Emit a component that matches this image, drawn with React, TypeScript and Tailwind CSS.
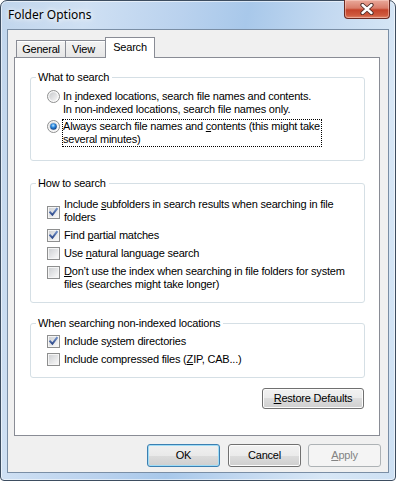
import React, { useId } from "react";

const uiFont = "font-['Liberation_Sans',Arial,sans-serif] text-[11px] leading-[13px] tracking-[-0.2px] text-black";

function cleanId(id: string) {
  return id.replace(/[^a-zA-Z0-9]/g, "");
}

function CheckBox({ checked }: { checked: boolean }) {
  const id = cleanId(useId());
  return (
    <svg width="13" height="13" viewBox="0 0 13 13" className="block shrink-0">
      <defs>
        <linearGradient id={id + "in"} x1="0" y1="0" x2="1" y2="1">
          <stop offset="0" stopColor="#cfd1d4" />
          <stop offset="1" stopColor="#f8f8f8" />
        </linearGradient>
        <linearGradient id={id + "ck"} x1="0" y1="0" x2="0" y2="1">
          <stop offset="0" stopColor="#6b8cc7" />
          <stop offset="1" stopColor="#2f4a8a" />
        </linearGradient>
      </defs>
      <rect x="0.5" y="0.5" width="12" height="12" fill="#f5f5f5" stroke="#8e8f8f" />
      <rect x="2" y="2" width="9" height="9" fill={`url(#${id}in)`} />
      {checked && (
        <path
          d="M3.2 6.4 L5.4 8.8 L9.8 3"
          fill="none"
          stroke={`url(#${id}ck)`}
          strokeWidth="2"
          strokeLinecap="square"
        />
      )}
    </svg>
  );
}

function Radio({ checked }: { checked: boolean }) {
  const id = cleanId(useId());
  return (
    <svg width="13" height="13" viewBox="0 0 13 13" className="block shrink-0">
      <defs>
        <linearGradient id={id + "out"} x1="0" y1="0" x2="1" y2="1">
          <stop offset="0" stopColor="#f2f2f2" />
          <stop offset="1" stopColor="#ffffff" />
        </linearGradient>
        <linearGradient id={id + "in"} x1="0" y1="0" x2="1" y2="1">
          <stop offset="0" stopColor="#c8cacd" />
          <stop offset="1" stopColor="#f6f6f6" />
        </linearGradient>
        <radialGradient id={id + "dot"} cx="0.45" cy="0.35" r="0.65">
          <stop offset="0" stopColor="#bfe6ff" />
          <stop offset="0.45" stopColor="#2d8ae0" />
          <stop offset="1" stopColor="#0d3a7e" />
        </radialGradient>
      </defs>
      <circle cx="6.5" cy="6.5" r="6" fill={`url(#${id}out)`} stroke="#8e8f8f" />
      <circle cx="6.5" cy="6.5" r="4.2" fill={`url(#${id}in)`} />
      {checked && <circle cx="6.5" cy="6.5" r="3.3" fill={`url(#${id}dot)`} />}
    </svg>
  );
}

function CheckRow({
  checked,
  boxTop = "mt-0",
  children,
}: {
  checked: boolean;
  boxTop?: string;
  children: React.ReactNode;
}) {
  return (
    <div className="flex items-start">
      <div className={boxTop}>
        <CheckBox checked={checked} />
      </div>
      <div className="ml-[4px]">{children}</div>
    </div>
  );
}

function Group({
  title,
  className,
  children,
}: {
  title: string;
  className: string;
  children: React.ReactNode;
}) {
  return (
    <fieldset className={`ml-[15px] w-[335px] rounded-[3px] border border-[#d5dfe5] p-0 ${className}`}>
      <legend className="ml-[5px] pl-[2px] pr-[3px]">{title}</legend>
      {children}
    </fieldset>
  );
}

function Button({
  children,
  className = "",
  isDefault = false,
  disabled = false,
}: {
  children: React.ReactNode;
  className?: string;
  isDefault?: boolean;
  disabled?: boolean;
}) {
  const look = disabled
    ? "border-[#adb2b5] bg-[#f4f4f4] text-[#838383]"
    : isDefault
      ? "border-[#3c7fb1] bg-[linear-gradient(#f0f0f0_0%,#e9e9e9_50%,#dcdcdc_50%,#cfcfcf_100%)] shadow-[inset_0_0_0_1px_#9fdcf6]"
      : "border-[#707070] bg-[linear-gradient(#f2f2f2_0%,#ebebeb_50%,#dddddd_50%,#cfcfcf_100%)] shadow-[inset_0_0_0_1px_#fcfcfc]";
  return (
    <div className={`flex items-center justify-center rounded-[3px] border ${look} ${className}`}>
      <span>{children}</span>
    </div>
  );
}

function CloseButton() {
  return (
    <div className="-mt-px mr-[5px] flex h-[19px] w-[46px] items-center justify-center rounded-b-[4px] border border-t-0 border-[#6b2a22] bg-[linear-gradient(#e9a99b_0%,#d97d6a_45%,#c4432b_55%,#cf5a3e_85%,#e0876c_100%)] shadow-[inset_0_0_0_1px_rgba(255,220,210,0.45)]">
      <svg width="14" height="12" viewBox="0 0 14 12">
        <path d="M2.5 2 L11.5 10 M11.5 2 L2.5 10" stroke="#4a2a26" strokeWidth="4.2" strokeLinecap="round" />
        <path d="M2.5 2 L11.5 10 M11.5 2 L2.5 10" stroke="#ffffff" strokeWidth="2.4" strokeLinecap="round" />
      </svg>
    </div>
  );
}

export default function App() {
  return (
    <div className="h-[481px] w-[396px] bg-white">
      <div className="flex h-[481px] w-[396px] flex-col rounded-t-[7px] rounded-b-[4px] border border-[#3d4d60] bg-[linear-gradient(100deg,#c0d5ec_0%,#cfe0f3_18%,#bad2ee_38%,#a8c8ea_52%,#c2d8f0_68%,#d8e7f6_85%,#cde0f3_100%)] shadow-[inset_0_0_0_1px_rgba(255,255,255,0.55)]">
        {/* title bar */}
        <div className="flex h-[28px] items-start justify-between">
          <div className="ml-[7px] mt-[6px] font-['Noto_Sans',sans-serif] text-[12px] leading-[16px] text-black [text-shadow:0_0_8px_#fff,0_0_4px_#fff]">
            Folder Options
          </div>
          <CloseButton />
        </div>

        {/* client area */}
        <div className={`ml-[6px] flex h-[444px] w-[382px] flex-col border border-[#7a8ea5] bg-[#f0f0f0] ${uiFont}`}>
          {/* tabs */}
          <div className="mt-[7px] flex h-[20px] items-end pl-[8px]">
            <div className="flex h-[17px] w-[50px] items-center justify-center border border-b-0 border-[#898c95] bg-[linear-gradient(#f3f3f3,#e6e6e6)] shadow-[inset_0_1px_0_#fff]">
              General
            </div>
            <div className="flex h-[17px] w-[40px] items-center justify-center border border-b-0 border-l-0 border-[#898c95] bg-[linear-gradient(#f3f3f3,#e6e6e6)] pr-[4px] shadow-[inset_0_1px_0_#fff]">
              View
            </div>
            <div className="relative z-10 -mb-px -ml-px flex h-[21px] w-[50px] items-center justify-center border border-b-0 border-[#898c95] bg-white pb-[2px]">
              Search
            </div>
          </div>

          {/* tab page */}
          <div className="ml-[6px] flex h-[379px] w-[366px] flex-col border border-[#898c95] bg-white">
            <Group title="What to search" className="mt-[13px]">
              <div className="flex flex-col pb-[13px] pl-[16px] pt-[5px]">
                <div className="flex items-start">
                  <div className="mt-[1px]">
                    <Radio checked={false} />
                  </div>
                  <div className="ml-[2px] border border-transparent pr-[1px]">
                    In <u>i</u>ndexed locations, search file names and contents.
                    <br />
                    In non-indexed locations, search file names only.
                  </div>
                </div>
                <div className="mt-[2px] flex items-start">
                  <div className="mt-[1px]">
                    <Radio checked={true} />
                  </div>
                  <div className="ml-[2px] border border-dotted border-black pr-[1px]">
                    Always search file names and <u>c</u>ontents (this might take
                    <br />
                    several minutes)
                  </div>
                </div>
              </div>
            </Group>

            <Group title="How to search" className="mt-[16px]">
              <div className="flex flex-col gap-[5px] pb-[11px] pl-[16px] pt-[8px]">
                <CheckRow checked={true} boxTop="mt-[8px]">
                  Include <u>s</u>ubfolders in search results when searching in file
                  <br />
                  folders
                </CheckRow>
                <CheckRow checked={true}>
                  Find <u>p</u>artial matches
                </CheckRow>
                <CheckRow checked={false}>
                  Use <u>n</u>atural language search
                </CheckRow>
                <CheckRow checked={false} boxTop="mt-[1px]">
                  <u>D</u>on’t use the index when searching in file folders for system
                  <br />
                  files (searches might take longer)
                </CheckRow>
              </div>
            </Group>

            <Group title="When searching non-indexed locations" className="mt-[14px]">
              <div className="flex flex-col gap-[5px] pb-[11px] pl-[16px] pt-[5px]">
                <CheckRow checked={true}>
                  Include s<u>y</u>stem directories
                </CheckRow>
                <CheckRow checked={false}>
                  Include compressed files (<u>Z</u>IP, CAB...)
                </CheckRow>
              </div>
            </Group>

            <div className="ml-[15px] mt-[10px] flex w-[335px] justify-end pr-[1px]">
              <Button className="h-[21px] w-[102px]">
                <u>R</u>estore Defaults
              </Button>
            </div>
          </div>

          {/* dialog buttons */}
          <div className="mt-[8px] flex">
            <Button isDefault className="ml-[139px] h-[23px] w-[73px]">
              OK
            </Button>
            <Button className="ml-[8px] h-[23px] w-[73px]">Cancel</Button>
            <Button disabled className="ml-[7px] h-[23px] w-[73px]">
              <u>A</u>pply
            </Button>
          </div>
        </div>
      </div>
    </div>
  );
}
